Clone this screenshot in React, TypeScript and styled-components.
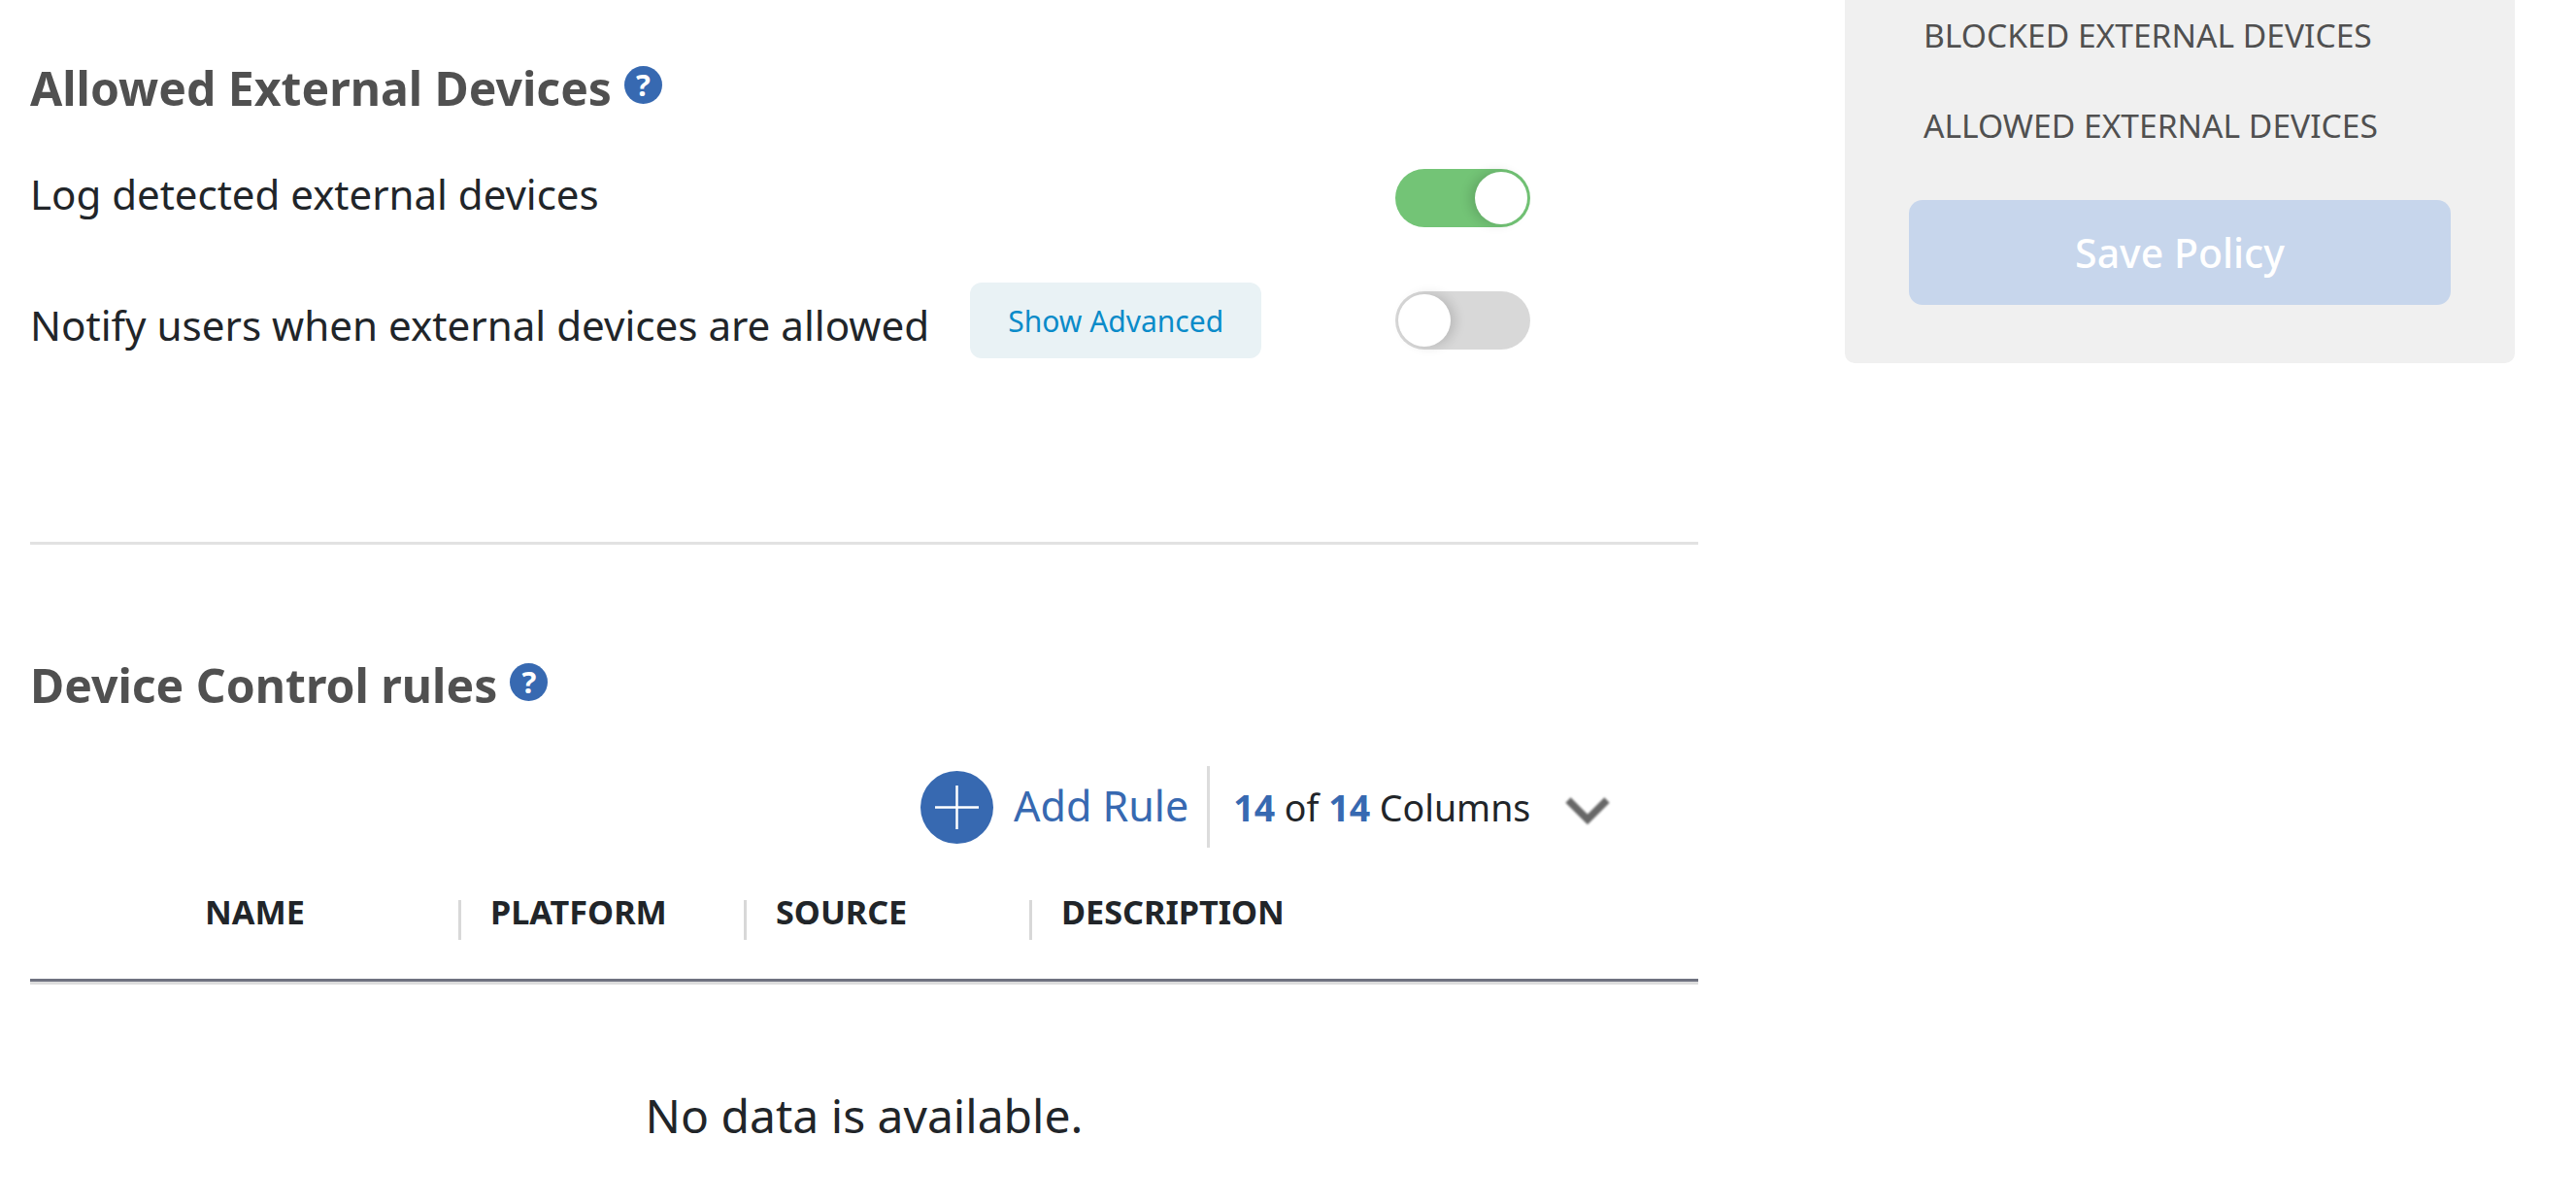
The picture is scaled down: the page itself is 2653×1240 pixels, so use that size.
import React from 'react';
import styled, { createGlobalStyle } from 'styled-components';

const GlobalStyle = createGlobalStyle`
  html, body {
    margin: 0;
    padding: 0;
    background: #fff;
    font-family: "Noto Sans", "Open Sans", sans-serif;
    color: #212529;
  }
`;

const Page = styled.div`
  display: flex;
  align-items: flex-start;
  width: 2653px;
  height: 1240px;
  overflow: hidden;
  padding-left: 31px;
  box-sizing: border-box;
`;

const Main = styled.main`
  width: 1718px;
  flex: none;
`;

const Side = styled.aside`
  width: 690px;
  height: 374px;
  flex: none;
  margin-left: 151px;
  padding: 14px 66px 0;
  box-sizing: border-box;
  background: #f0f0f0;
  border-radius: 0 0 10px 10px;
`;

const SideLink = styled.div`
  font-size: 33.6px;
  line-height: 45px;
  height: 93px;
  color: #505050;
  padding-left: 15px;
  white-space: nowrap;
`;

const SaveButton = styled.button`
  display: block;
  width: 558px;
  height: 108px;
  margin-top: 6px;
  padding: 0;
  border: 0;
  border-radius: 14px;
  background: #c7d6ec;
  color: #fff;
  font: 500 41px "Noto Sans", sans-serif;
`;

const Heading = styled.h2<{ $top: number }>`
  display: flex;
  align-items: center;
  margin: ${(p) => p.$top}px 0 0;
  height: 66px;
  font-size: 48.1px;
  font-weight: 700;
  color: #505050;
`;

const Help = styled.span`
  display: inline-flex;
  align-items: center;
  justify-content: center;
  width: 39px;
  height: 39px;
  margin: -6px 0 0 13px;
  border-radius: 50%;
  background: #3769b1;
  color: #fff;
  font-size: 31px;
  font-weight: 700;
`;

const Settings = styled.div`
  width: 1545px;
  margin-top: 18px;
`;

const Row = styled.div`
  display: flex;
  align-items: center;
  height: 126px;
`;

const Label = styled.span<{ $nudge: number; $size: number }>`
  margin-top: ${(p) => p.$nudge}px;
  font-size: ${(p) => p.$size}px;
  white-space: nowrap;
`;

const Advanced = styled.button`
  width: 300px;
  height: 78px;
  margin-left: 42px;
  padding: 0;
  border: 0;
  border-radius: 12px;
  background: #e9f2f5;
  color: #0a8bc9;
  font: 400 30px "Noto Sans", sans-serif;
`;

const Toggle = styled.span<{ $on: boolean }>`
  display: flex;
  justify-content: ${(p) => (p.$on ? 'flex-end' : 'flex-start')};
  align-items: center;
  width: 139px;
  height: 60px;
  margin-left: auto;
  padding: 3px;
  box-sizing: border-box;
  border-radius: 30px;
  background: ${(p) => (p.$on ? '#73c476' : '#d8d8d8')};
`;

const Knob = styled.span<{ $on: boolean }>`
  width: 54px;
  height: 54px;
  border-radius: 50%;
  background: #fff;
  box-shadow: ${(p) => (p.$on ? '-5px 0 12px' : '5px 0 12px')} rgba(0, 0, 0, 0.14);
`;

const Divider = styled.hr`
  height: 3px;
  margin: 165px 0 0;
  border: 0;
  background: #e2e2e2;
`;

const Toolbar = styled.div`
  display: flex;
  align-items: center;
  height: 84px;
  margin-top: 51px;
  padding-left: 917px;
`;

const AddIcon = styled.span`
  display: block;
  width: 75px;
  height: 75px;
  flex: none;
`;

const AddLabel = styled.span`
  margin: -4px 0 0 21px;
  font-size: 43px;
  color: #3769b1;
  white-space: nowrap;
`;

const ToolbarSep = styled.span`
  width: 3px;
  height: 84px;
  margin-left: 19px;
  background: #dcdcdc;
`;

const ColumnCount = styled.span`
  margin-left: 24px;
  font-size: 37.5px;
  white-space: nowrap;
`;

const Count = styled.b`
  color: #3769b1;
`;

const Chevron = styled.svg`
  width: 47px;
  height: 32px;
  margin: 8px 0 0 36px;
  flex: none;
  filter: blur(1.2px);
`;

const TableHead = styled.div`
  display: grid;
  grid-template-columns: 441px 294px 294px 1fr;
  height: 107px;
  margin-top: 28px;
  border-bottom: 3px solid #6f7280;
  box-shadow: 0 3px 0 #dcdcdc;
`;

const HeadCell = styled.div<{ $first?: boolean }>`
  position: relative;
  padding: 15px 0 0 ${(p) => (p.$first ? '180px' : '33px')};
  font-size: 34.2px;
  line-height: 46px;
  font-weight: 700;
  color: #212529;
  ${(p) =>
    p.$first
      ? ''
      : `&::before {
    content: '';
    position: absolute;
    left: 0;
    top: 26px;
    width: 3px;
    height: 41px;
    background: #d8d8d8;
  }`}
`;

const Empty = styled.div`
  padding-top: 105px;
  text-align: center;
  font-size: 48px;
  color: #212529;
`;

export default function App() {
  return (
    <Page>
      <GlobalStyle />
      <Main>
        <Heading $top={57}>
          Allowed External Devices <Help>?</Help>
        </Heading>
        <Settings>
          <Row>
            <Label $nudge={-9} $size={42}>
              Log detected external devices
            </Label>
            <Toggle $on>
              <Knob $on />
            </Toggle>
          </Row>
          <Row>
            <Label $nudge={8} $size={42.15}>
              Notify users when external devices are allowed
            </Label>
            <Advanced>Show Advanced</Advanced>
            <Toggle $on={false}>
              <Knob $on={false} />
            </Toggle>
          </Row>
        </Settings>
        <Divider />
        <Heading $top={111}>
          Device Control rules <Help>?</Help>
        </Heading>
        <Toolbar>
          <AddIcon>
            <svg width="75" height="75" viewBox="0 0 75 75">
              <circle cx="37.5" cy="37.5" r="37.5" fill="#3769b1" />
              <path d="M37.5 15v45M15 37.5h45" stroke="#fff" strokeWidth="2.5" fill="none" />
            </svg>
          </AddIcon>
          <AddLabel>Add Rule</AddLabel>
          <ToolbarSep />
          <ColumnCount>
            <Count>14</Count> of <Count>14</Count> Columns
          </ColumnCount>
          <Chevron viewBox="0 0 47 32">
            <path d="M3 5l20 20L43 5" stroke="#686868" strokeWidth="7.5" fill="none" />
          </Chevron>
        </Toolbar>
        <TableHead>
          <HeadCell $first>NAME</HeadCell>
          <HeadCell>PLATFORM</HeadCell>
          <HeadCell>SOURCE</HeadCell>
          <HeadCell>DESCRIPTION</HeadCell>
        </TableHead>
        <Empty>No data is available.</Empty>
      </Main>
      <Side>
        <SideLink>BLOCKED EXTERNAL DEVICES</SideLink>
        <SideLink>ALLOWED EXTERNAL DEVICES</SideLink>
        <SaveButton>Save Policy</SaveButton>
      </Side>
    </Page>
  );
}
